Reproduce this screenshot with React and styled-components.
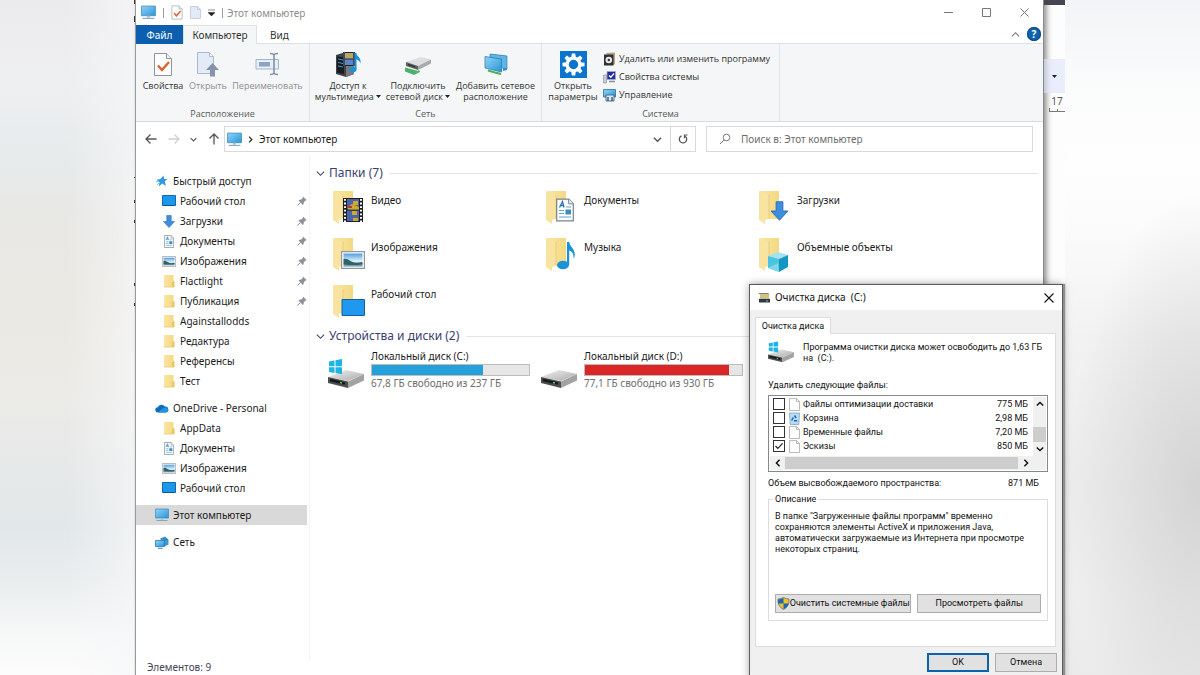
import React, { useState } from 'react';
import styled, { createGlobalStyle, css } from 'styled-components';

const GlobalStyle = createGlobalStyle`
  * {
    box-sizing: border-box;
  }

  body {
    margin: 0;
    font-family: 'Noto Sans', 'Open Sans', sans-serif;
    font-size: 10px;
    line-height: 12px;
    color: #1b1b1b;
  }

  button, input {
    font: inherit;
    color: inherit;
    margin: 0;
  }

  button {
    padding: 0;
    border: 0;
    background: none;
  }

  a {
    color: inherit;
    text-decoration: none;
  }

  svg {
    display: block;
    flex: none;
  }
`;

const Page = styled.div`
  display: grid;
  grid-template-columns: 134px minmax(0, 1fr) 135px;
  min-height: 100vh;
  overflow: hidden;
`;

const LeftBackdrop = styled.div`
  background:
    linear-gradient(90deg, rgba(246, 247, 248, 0) 50%, rgba(246, 247, 248, 0.7) 100%),
    linear-gradient(180deg, #ebebed 0%, #eeeff1 12%, #e7ebec 22%, #e8e8e5 32%, #ebe9e3 48%, #ebebe8 60%, #e2e7e9 78%, #e9edee 86%, #f7f8f8 94%, #fbfcfb 100%);
`;

const RightBackdrop = styled.div`
  background:
    radial-gradient(ellipse 130px 290px at 100% 72%, rgba(206, 206, 206, 0.8), rgba(206, 206, 206, 0) 100%),
    linear-gradient(180deg, #f3f4f7 0%, #fafbfb 12%, #fefefe 24%, #fbfbfb 34%, #f2f2f2 50%, #ececec 72%, #eeeeee 88%, #ebebeb 100%);
`;

const Desktop = styled.div`
  position: relative;
  display: grid;
  grid-template-columns: 1px minmax(0, 1fr) 21px;
  background: #ffffff;
`;

const mark = (from, to) => `transparent ${from}px, #333 ${from}px, #333 ${to}px, transparent ${to}px`;

const LeftSliver = styled.div`
  background:
    linear-gradient(180deg, ${[mark(0, 4), mark(16, 22), mark(177, 178), mark(200, 203), mark(220, 223), mark(283, 286), mark(303, 306)].join(', ')}),
    #e4e5e6;
`;

/* the document that stays visible behind the explorer */
const Behind = styled.div`
  display: flex;
  flex-direction: column;
  background: #fdfdfe;
  box-shadow: inset 7px 0 6px -5px rgba(0, 0, 0, 0.5);
  overflow: hidden;
`;

const BehindTop = styled.div`
  height: 5px;
  margin-bottom: 54px;
  background: #45464f;
`;

const BehindTool = styled.div`
  height: 34px;
  display: flex;
  align-items: center;
  justify-content: center;
  background: rgba(222, 226, 248, 0.6);
`;

const Ruler = styled.div`
  display: flex;
  flex-direction: column;
  align-items: center;
  padding-top: 2px;
  padding-left: 5px;
  color: #555;
`;

/* Explorer */

const Explorer = styled.main`
  display: flex;
  flex-direction: column;
  min-height: 100vh;
  background: #ffffff;
  border-left: 1px solid #9b9b9d;
  border-right: 1px solid #8a8a8c;
`;

const TitleBar = styled.header`
  display: flex;
  align-items: center;
  height: 25px;
  padding: 0 5px;
  color: #8d8d8d;
`;

const QuickTools = styled.div`
  display: flex;
  align-items: center;
  gap: 7px;
  margin-right: 4px;
`;

const Divider = styled.span`
  width: 1px;
  height: 10px;
  background: #9a9a9a;
`;

const WindowTitle = styled.h1`
  flex: 1;
  margin: 0;
  font-size: 10px;
  font-weight: 400;
`;

const WindowButtons = styled.div`
  display: flex;
  margin-right: -5px;
`;

const WindowButton = styled.button`
  display: flex;
  align-items: center;
  justify-content: center;
  width: 38px;
  height: 24px;
  color: #777;
`;

const TabBar = styled.div`
  display: flex;
  height: 19px;
  align-items: stretch;
  border-bottom: 1px solid #dcdfe3;
`;

const Tab = styled.button`
  display: flex;
  align-items: center;
  justify-content: center;
  height: 19px;
  padding: 0 13px;
  color: #333;

  ${props => props.$file && css`
    min-width: 47px;
    padding: 0;
    background: #0c5faf;
    color: #ffffff;
  `}

  ${props => props.$active && css`
    min-width: 74px;
    padding: 0;
    background: #f5f6f7;
    border: 1px solid #dfe1e4;
    border-bottom: 0;
  `}
`;

const TabTools = styled.div`
  display: flex;
  align-items: center;
  gap: 7px;
  margin-left: auto;
  padding-right: 2px;
  color: #777;
`;

const HelpButton = styled.button`
  display: flex;
  align-items: center;
  justify-content: center;
  width: 14px;
  height: 14px;
  border-radius: 50%;
  background: #0f62ad;
  box-shadow: inset 0 0 0 1px #0a4a86;
  color: #ffffff;
  font-weight: 700;
`;

const Ribbon = styled.div`
  display: flex;
  height: 78px;
  background: #f4f6f7;
  border-bottom: 1px solid #d8dadc;
  font-family: 'Open Sans', 'Noto Sans', sans-serif;
  font-size: 9px;
`;

const RibbonGroup = styled.section`
  display: flex;
  flex-direction: column;
  justify-content: space-between;
  padding: 6px 5px 1px;
  border-right: 1px solid #e1e3e5;
`;

const RibbonButtons = styled.div`
  display: flex;
  gap: 4px;
`;

const RibbonLabel = styled.h2`
  margin: 0;
  font-size: 9px;
  font-weight: 400;
  text-align: center;
  color: #5a5a5a;
`;

const RibbonButton = styled.button`
  display: flex;
  flex-direction: column;
  align-items: center;
  gap: 2px;
  width: ${props => props.$width}px;
  line-height: 11px;
  white-space: nowrap;
  color: ${props => (props.disabled ? '#8e8e90' : '#333')};
`;

const RibbonIcon = styled.span`
  display: flex;
  align-items: center;
  justify-content: center;
  height: 28px;
`;

const RibbonList = styled.div`
  display: flex;
  flex-direction: column;
  width: 171px;
`;

const RibbonListButton = styled.button`
  display: flex;
  align-items: center;
  gap: 3px;
  height: 18px;
  white-space: nowrap;
  color: #333;
`;

const AddressRow = styled.div`
  display: grid;
  grid-template-columns: auto minmax(0, 482fr) minmax(0, 327fr);
  align-items: center;
  height: 34px;
  padding: 0 10px 0 9px;
`;

const NavButtons = styled.div`
  display: flex;
  align-items: center;
  justify-content: space-between;
  width: 75px;
  margin-right: 4px;
  color: #555;
`;

const AddressBox = styled.div`
  display: flex;
  align-items: center;
  height: 26px;
  margin-right: 10px;
  border: 1px solid #d9d9d9;
  color: #1b1b1b;
`;

const Crumb = styled.button`
  display: flex;
  align-items: center;
  gap: 5px;
  flex: 1;
  padding-left: 2px;
`;

const BoxButton = styled.button`
  display: flex;
  align-items: center;
  justify-content: center;
  width: 25px;
  height: 24px;
  color: #555;
  border-left: ${props => (props.$ruled ? '1px solid #d9d9d9' : '0')};
`;

const SearchBox = styled.label`
  display: flex;
  align-items: center;
  gap: 10px;
  height: 26px;
  padding-left: 12px;
  border: 1px solid #d9d9d9;
`;

const SearchInput = styled.input`
  flex: 1;
  min-width: 0;
  padding: 0;
  border: 0;
  outline: 0;
  background: none;

  &::placeholder {
    color: #6d6d6d;
    opacity: 1;
  }
`;

const ExplorerBody = styled.div`
  flex: 1;
  display: flex;
`;

const Sidebar = styled.nav`
  width: 174px;
  padding: 15px 2px 0 0;
  border-right: 1px solid #f4f4f5;
`;

const TreeGroup = styled.ul`
  list-style: none;
  margin: 0 0 7px;
  padding: 0;
`;

const TreeLink = styled.a`
  display: flex;
  align-items: center;
  gap: 4px;
  height: 20px;
  padding-left: ${props => (props.$nested ? 26 : 19)}px;
  background: ${props => (props.$selected ? '#d9d9d9' : 'none')};
`;

const TreeIcon = styled.span`
  display: flex;
  justify-content: center;
  width: 14px;
`;

const TreeText = styled.span`
  flex: 1;
  white-space: nowrap;
`;

const Content = styled.div`
  flex: 1;
  min-width: 0;
  padding: 8px 5px 0 6px;
`;

const SectionHeader = styled.h2`
  display: flex;
  align-items: center;
  gap: 4px;
  height: 18px;
  margin: 0;
  font-size: 12px;
  font-weight: 400;
  color: #39406f;
  white-space: nowrap;

  &::after {
    content: '';
    flex: 1;
    height: 1px;
    margin-left: 3px;
    background: #e3e3e5;
  }
`;

const TileGrid = styled.div`
  display: grid;
  grid-template-columns: repeat(auto-fill, 213px);
  grid-auto-rows: 43px;
  row-gap: 4px;
  padding: ${props => (props.$tight ? 5 : 8)}px 0 0 12px;
`;

const Tile = styled.a`
  display: flex;
  white-space: nowrap;
`;

const TileIcon = styled.span`
  width: 43px;
  padding-left: ${props => (props.$drive ? 0 : 4)}px;
  padding-top: ${props => (props.$drive ? 7 : 0)}px;
`;

const TileText = styled.span`
  padding-top: 4px;
`;

const DriveText = styled.span`
  display: flex;
  flex-direction: column;
  width: 159px;
`;

const Capacity = styled.span`
  height: 12px;
  margin: 2px 0 1px;
  border: 1px solid #bcbcbc;
  background: #e6e6e6;
`;

const CapacityFill = styled.span`
  display: block;
  height: 100%;
  background: ${props => (props.$full ? '#da2626' : '#26a0da')};
`;

const DriveFree = styled.span`
  color: #6d6d6d;
`;

const StatusBar = styled.footer`
  height: 15px;
  padding-left: 11px;
  line-height: 15px;
  color: #3f4656;
`;

/* Disk cleanup dialog */

const Dialog = styled.section`
  position: absolute;
  top: 284px;
  right: 2px;
  width: 314px;
  border: 1px solid #5c5c5e;
  background: #f0f0f0;
  box-shadow: 2px 0 1px #8f8f90, 0 0 8px rgba(0, 0, 0, 0.35);
  font-family: Roboto, 'Liberation Sans', sans-serif;
  font-size: 9px;
  line-height: 11px;
  color: #111;
`;

const DialogTitle = styled.header`
  display: flex;
  align-items: center;
  gap: 4px;
  height: 25px;
  padding: 0 2px 0 7px;
  background: #ffffff;
  font-family: 'Noto Sans', 'Open Sans', sans-serif;

  h2 {
    flex: 1;
    margin: 0;
    font-size: 10px;
    font-weight: 400;
    white-space: pre;
  }
`;

const CloseButton = styled.button`
  display: flex;
  align-items: center;
  justify-content: center;
  width: 22px;
  height: 22px;
`;

const DialogBody = styled.div`
  padding: 7px 5px 8px;
`;

const DialogTab = styled.button`
  position: relative;
  z-index: 1;
  display: block;
  min-width: 76px;
  height: 17px;
  margin-bottom: -1px;
  background: #ffffff;
  border: 1px solid #dcdcdc;
  border-bottom: 0;
`;

const Panel = styled.div`
  margin-right: 1px;
  padding: 6px 7px 25px 12px;
  background: #ffffff;
  border: 1px solid #dcdcdc;
`;

const Summary = styled.div`
  display: flex;
  gap: 9px;
  margin-bottom: 16px;

  p {
    margin: 2px 0 0;
  }
`;

const FileBox = styled.div`
  margin-top: 4px;
  border: 1px solid #828790;
  padding: 1px;
`;

const FileScroll = styled.div`
  display: flex;
`;

const FileList = styled.ul`
  flex: 1;
  list-style: none;
  margin: 0;
  padding: 0 5px 3px 3px;
`;

const FileRow = styled.label`
  display: flex;
  align-items: center;
  gap: 3px;
  height: 14px;
  white-space: nowrap;
`;

const FileName = styled.span`
  flex: 1;
`;

const Check = styled.input`
  appearance: none;
  width: 12px;
  height: 12px;
  margin-right: 1px;
  border: 1px solid #333;
  background: #ffffff;

  &:checked {
    background: #ffffff url("data:image/svg+xml,%3Csvg xmlns='http://www.w3.org/2000/svg' viewBox='0 0 10 10'%3E%3Cpath d='M1.5 5l2.3 2.4L8.6 2.4' fill='none' stroke='%23222' stroke-width='1.2'/%3E%3C/svg%3E");
  }
`;

const ScrollColumn = styled.div`
  display: flex;
  flex-direction: column;
  width: 13px;
  background: #f0f0f0;
`;

const ScrollRow = styled.div`
  display: flex;
  height: 14px;
  background: #f0f0f0;
`;

const ScrollButton = styled.button`
  display: flex;
  align-items: center;
  justify-content: center;
  width: ${props => (props.$row ? 15 : 13)}px;
  height: 14px;
`;

const VThumb = styled.span`
  height: 15px;
  margin-top: auto;
  background: #cdcdcd;
`;

const HThumb = styled.span`
  flex: 1;
  margin: 1px 0;
  background: #cdcdcd;
`;

const Total = styled.div`
  display: flex;
  justify-content: space-between;
  margin: 6px 9px 5px 0;
`;

const Description = styled.fieldset`
  margin: 0;
  padding: 6px 6px 7px;
  border: 1px solid #dcdcdc;

  legend {
    margin-left: -2px;
    padding: 0 2px;
  }

  p {
    min-height: 83px;
    margin: 0;
  }
`;

const ButtonRow = styled.div`
  display: flex;
  gap: 6px;
  justify-content: ${props => (props.$end ? 'flex-end' : 'stretch')};
  margin-top: ${props => (props.$end ? 6 : 0)}px;
`;

const DialogButton = styled.button`
  display: flex;
  align-items: center;
  justify-content: center;
  flex: ${props => props.$grow || 'none'};
  width: 62px;
  height: 19px;
  white-space: nowrap;
  background: #e1e1e1;
  border: ${props => (props.$primary ? '2px solid #0a64ad' : '1px solid #adadad')};
`;

/* Icons */

const Gradients = () => (
  <svg width="0" height="0" style={{ position: 'absolute' }} aria-hidden="true">
    <defs>
      <linearGradient id="screen" x1="0" y1="0" x2="1" y2="1">
        <stop offset="0" stopColor="#8fd6f8" />
        <stop offset="1" stopColor="#2a93d6" />
      </linearGradient>
      <linearGradient id="folder" x1="0" y1="0" x2="1" y2="0">
        <stop offset="0" stopColor="#fbe6a2" />
        <stop offset="1" stopColor="#f3d982" />
      </linearGradient>
      <linearGradient id="sky" x1="0" y1="0" x2="0" y2="1">
        <stop offset="0" stopColor="#4f9fdc" />
        <stop offset="0.6" stopColor="#e2f2fb" />
        <stop offset="1" stopColor="#5a8f96" />
      </linearGradient>
      <linearGradient id="metal" x1="0" y1="0" x2="1" y2="1">
        <stop offset="0" stopColor="#f2f2f2" />
        <stop offset="1" stopColor="#a9a9a9" />
      </linearGradient>
    </defs>
  </svg>
);

const MonitorIcon = ({ width = 14 }) => (
  <svg width={width} height={width} viewBox="0 0 14 14">
    <path d="M.5 1h13v9H.5z" fill="url(#screen)" stroke="#3c88b8" strokeWidth=".7" />
    <path d="M5.500 10h3v1.800h-3z" fill="#9cc4da" />
    <path d="M1.500 12.500h11" stroke="#86a6b6" />
  </svg>
);

const PageCheckIcon = ({ width = 20, height = 25 }) => (
  <svg width={width} height={height} viewBox="0 0 20 25">
    <path d="M1.500 1.500h12l5 5v17h-17z" fill="#fff" stroke="#8f959b" />
    <path d="M13.500 1.500v5h5" fill="#f0f0f0" stroke="#8f959b" />
    <path d="M5 13.500l4 4.500 7-8" fill="none" stroke="#e0622a" strokeWidth="2.400" />
  </svg>
);

const BlankPageIcon = ({ width = 11, height = 13, fill = '#fff', stroke = '#a9a9a9' }) => (
  <svg width={width} height={height} viewBox="0 0 11 13">
    <path d="M.5.5h7l3 3v9H.5z" fill={fill} stroke={stroke} strokeWidth=".8" />
    <path d="M7.500.5v3h3" fill="none" stroke={stroke} strokeWidth=".8" />
  </svg>
);

const OpenIcon = () => (
  <svg width="24" height="26" viewBox="0 0 24 26">
    <path d="M1.500 1.500h12l4 4v17h-16z" fill="#e3ebf7" stroke="#a9b9d3" />
    <path d="M13.500 1.500v4h4" fill="#f3f6fb" stroke="#a9b9d3" />
    <path d="M16.500 12l6.500 7h-4v6.500h-5V19h-4z" fill="#8593ab" />
  </svg>
);

const RenameIcon = () => (
  <svg width="26" height="24" viewBox="0 0 26 24">
    <path d="M1 7.500h22.500v9.500H1z" fill="#e9eff8" stroke="#a3b4cf" />
    <path d="M4 10h11v4.500H4z" fill="#8fa2c0" />
    <path d="M15 1.500q4 0 4 2v17q0 2-4 2M23 1.500q-4 0-4 2v17q0 2 4 2" fill="none" stroke="#8391a8" strokeWidth="1.600" />
  </svg>
);

const MediaIcon = () => (
  <svg width="27" height="27" viewBox="0 0 27 27">
    <path d="M1 4l10-3 8 2v20l-8 3-10-3z" fill="#3f4246" />
    <path d="M11 4l8-1v20l-8 3z" fill="#77797c" />
    <path d="M2 5.500l7 1V23l-7-1.500z" fill="#191b1e" />
    <path d="M3 8l5 1M3 11.500l5 1M3 15l5 1" stroke="#3b9be0" />
    <path d="M8 1h12v14H8z" fill="#20242c" />
    <path d="M10 2h8v5.500h-8z" fill="#b9a765" />
    <path d="M10 8.500h8V14h-8z" fill="#5b86c9" />
    <path d="M9 1.500v13M19 1.500v13" stroke="#e8e8e8" strokeWidth=".8" strokeDasharray="1 1" />
    <path d="M20.500 2v16" stroke="#1c8fdb" strokeWidth="2" />
    <path d="M20.500 1.500c1 4 6 4.500 5 11-1-3-3-4-5-4.500z" fill="#1c8fdb" />
    <ellipse cx="18" cy="18.500" rx="3.500" ry="2.600" fill="#1c8fdb" />
  </svg>
);

const NetDriveIcon = () => (
  <svg width="28" height="22" viewBox="0 0 28 22">
    <path d="M2 9l15-5 10 2.500L14 13z" fill="#dedede" />
    <path d="M2 9l12 4v4L2 13z" fill="#5d6062" />
    <path d="M14 13l13-6.500v4L14 17z" fill="#a9a9a9" />
    <path d="M4 11.500l7 2.300" stroke="#222" />
    <path d="M1 14.500l6 1.500 7 2 1-1.500 1 2.500-6 3-9-3.500z" fill="#4fb069" />
  </svg>
);

const NetPlaceIcon = () => (
  <svg width="24" height="24" viewBox="0 0 24 24">
    <path d="M6 2l17 2v14l-4 1V6z" fill="#3d8fca" />
    <path d="M6 2l17 2v13L6 13z" fill="#5cb6ea" stroke="#2a74a8" strokeWidth=".6" />
    <path d="M1 4.500l16.500 2.500v13L1 16z" fill="url(#screen)" stroke="#2a74a8" strokeWidth=".7" />
    <path d="M4 18.500l7 2 6 1.500" fill="none" stroke="#49b05c" strokeWidth="2" />
  </svg>
);

const GearIcon = () => (
  <svg width="27" height="27" viewBox="0 0 27 27">
    <path d="M0 0h27v27H0z" fill="#0a74cf" />
    <circle cx="13.500" cy="13.500" r="6.300" fill="none" stroke="#fff" strokeWidth="3.200" />
    {[0, 45, 90, 135, 180, 225, 270, 315].map(angle => (
      <path key={angle} d="M11.800 2.500h3.400l.6 4h-4.600z" fill="#fff" transform={`rotate(${angle} 13.500 13.500)`} />
    ))}
  </svg>
);

const ProgramIcon = () => (
  <svg width="13" height="14" viewBox="0 0 13 14">
    <path d="M3 1l9-.5V12l-2 1z" fill="#b9a67e" />
    <path d="M1 2.500h9.500v11H1z" fill="#2e3236" />
    <circle cx="5.800" cy="8" r="3.300" fill="#e9e9e9" />
    <circle cx="5.800" cy="8" r="1.200" fill="#2e3236" />
  </svg>
);

const SystemIcon = () => (
  <svg width="13" height="14" viewBox="0 0 13 14">
    <path d="M.5 5h3v8h-3z" fill="#c9ccd2" stroke="#878b92" strokeWidth=".6" />
    <path d="M4 1.500h8.500v8H4z" fill="#1e2ea0" stroke="#a8aebb" strokeWidth=".8" />
    <path d="M6 5.500l1.800 1.800L11 3.500" fill="none" stroke="#fff" strokeWidth="1.300" />
    <path d="M6 11.500h6" stroke="#8b8f97" strokeWidth="1.500" />
  </svg>
);

const ManageIcon = () => (
  <svg width="13" height="14" viewBox="0 0 13 14">
    <path d="M.5 1.500h12v7.500H.5z" fill="url(#screen)" stroke="#2c6f9f" strokeWidth=".8" />
    <path d="M3 7h8v6H3z" fill="#dbe7f2" stroke="#31587a" strokeWidth=".8" />
    <path d="M5 9v4M9 9v4" stroke="#1e3e60" strokeWidth="1.200" />
  </svg>
);

const Chevron = ({ dir = 'down', size = 9, weight = 1.2 }) => {
  const paths = {
    down: 'M1 3l4 4 4-4',
    up: 'M1 7l4-4 4 4',
    left: 'M7 1L3 5l4 4',
    right: 'M3 1l4 4-4 4',
  };
  return (
    <svg width={size} height={size} viewBox="0 0 10 10">
      <path d={paths[dir]} fill="none" stroke="currentColor" strokeWidth={weight} />
    </svg>
  );
};

const Arrow = ({ d, color = '#555' }) => (
  <svg width="12" height="12" viewBox="0 0 12 12">
    <path d={d} fill="none" stroke={color} strokeWidth="1.300" />
  </svg>
);

const Caret = ({ width = 5 }) => (
  <svg width={width} height="8" viewBox="0 0 5 8" style={{ display: 'inline' }}>
    <path d="M0 3h5L2.500 6z" fill="#222" />
  </svg>
);

const CrossIcon = ({ size = 10 }) => (
  <svg width={size} height={size} viewBox="0 0 10 10">
    <path d="M.5.5l9 9M9.500.5l-9 9" stroke="currentColor" strokeWidth="1.100" />
  </svg>
);

const RefreshIcon = () => (
  <svg width="10" height="10" viewBox="0 0 10 10">
    <path d="M3.500 1.800A3.700 3.700 0 1 0 7.200 2.200" fill="none" stroke="#555" strokeWidth="1.300" />
    <path d="M9.500 1h-3v3.200" fill="none" stroke="#555" strokeWidth="1.200" />
  </svg>
);

const LensIcon = () => (
  <svg width="12" height="12" viewBox="0 0 12 12">
    <circle cx="7.500" cy="4.500" r="3.300" fill="none" stroke="#777" />
    <path d="M5 7L1 11" stroke="#777" />
  </svg>
);

const StarIcon = () => (
  <svg width="12" height="12" viewBox="0 0 12 12">
    <path d="M7.500.5l.6 3.400 3.500.1-2.800 2.300 1 4.600-3.500-2.300-3.600 3 .9-4.400L.5 4.700l3.900-.6z" fill="#2f9ade" />
    <path d="M0 7l3-1M1 10l2-2" stroke="#7cc0ea" />
  </svg>
);

const DesktopIcon = () => (
  <svg width="14" height="12" viewBox="0 0 14 12">
    <path d="M.5.5h13v10H.5z" fill="#1b97ec" stroke="#1569ab" />
    <path d="M1 10.500h12" stroke="#0f5690" />
  </svg>
);

const DownIcon = ({ width = 12, height = 13 }) => (
  <svg width={width} height={height} viewBox="0 0 12 13">
    <path d="M3.800.5h4.400v6h3.300L6 12.500.5 6.500h3.300z" fill="#3d8ede" stroke="#2a6db4" strokeWidth=".6" />
  </svg>
);

const DocIcon = ({ width = 10, height = 13 }) => (
  <svg width={width} height={height} viewBox="0 0 18 23">
    <path d="M.7.700h12l4.600 4.600v17H.7z" fill="#fff" stroke="#76838f" strokeWidth="1.200" />
    <path d="M12.700.7v4.600h4.600" fill="#eef3f7" stroke="#76838f" />
    <path d="M3.500 9l3-6 1.500 6M4.500 7h3" fill="none" stroke="#2672b5" strokeWidth="1.300" />
    <path d="M10 8.500h5M3 12h5M3 15h5M3 18.500h12" stroke="#5aa3d8" strokeWidth="1.200" />
    <path d="M9.500 11h5.500v5H9.500z" fill="#3b8cc4" />
  </svg>
);

const PictureIcon = ({ width = 14, height = 11 }) => (
  <svg width={width} height={height} viewBox="0 0 24 18">
    <path d="M.6.600h22.800v16.800H.6z" fill="#fff" stroke="#8d979f" strokeWidth="1.200" />
    <path d="M2.500 2.500h19v13h-19z" fill="url(#sky)" />
    <path d="M2.500 8q3-1 7 2t12 1V13.500q-10 1-19 0z" fill="#33606a" />
  </svg>
);

const SmallFolderIcon = () => (
  <svg width="12" height="14" viewBox="0 0 12 14">
    <path d="M1 1h9.500v12H1z" fill="url(#folder)" />
    <path d="M9 8l2.500-1v6H9z" fill="#ecc45c" />
    <path d="M1 13h10" stroke="#e7c670" strokeWidth=".8" />
  </svg>
);

const CloudIcon = () => (
  <svg width="14" height="9" viewBox="0 0 14 9">
    <path d="M3 8.500A2.600 2.600 0 0 1 2.800 3.300 4 4 0 0 1 9.800 2.600 3 3 0 0 1 11 8.500z" fill="#0f6cbf" />
    <path d="M4 8.500q0-2 3-3.500l3.500-1.700a2.700 2.700 0 0 1 .8 5.200z" fill="#1f93e4" />
  </svg>
);

const NetworkIcon = () => (
  <svg width="14" height="13" viewBox="0 0 14 13">
    <path d="M5 2.500l5-2 3.500 3v5l-4 2z" fill="#3f98cc" />
    <path d="M.5 4.500h9V10.500h-9z" fill="url(#screen)" stroke="#2878ae" strokeWidth=".8" />
    <path d="M3 12.300h4.500M8 2.500l5 1.500" stroke="#2f7fb3" />
  </svg>
);

const PinIcon = () => (
  <svg width="10" height="10" viewBox="0 0 10 10">
    <path d="M6 .5L9.500 4l-1 .4-1.700 1.800-.2 2L5.800 9 1.500 4.600l.8-.8 2-.2 1.600-1.800z" fill="#8b9299" />
    <path d="M3.600 6.400L.5 9.500" stroke="#8b9299" />
  </svg>
);

const overlays = {
  video: (
    <g transform="translate(11 8)">
      <path d="M0 0h20v24H0z" fill="#1c1e22" />
      <path d="M4 1h12v10.500H4zM4 12.500h12V23H4z" fill="#4765a8" />
      <path d="M5 9l4-3 7 3v2.500H5zM9 13h5v4H9zM10 3h5v4h-5zM10 20h5v3h-5z" fill="#d3a829" />
      <path d="M4 8h5v2H4z" fill="#b53a34" />
      <path d="M2 1v23M18 1v23" stroke="#fff" strokeWidth="2" strokeDasharray="1.800 1.800" />
    </g>
  ),
  docs: (
    <g transform="translate(11 8)">
      <DocIcon width={18} height={24} />
    </g>
  ),
  down: (
    <g transform="translate(12 11)">
      <DownIcon width={19} height={20} />
    </g>
  ),
  pictures: (
    <g transform="translate(9 14)">
      <PictureIcon width={24} height={18} />
    </g>
  ),
  music: (
    <g fill="#1a93d6">
      <path d="M22 5h2.200c.5 5 6.500 7 5.500 14-.4 1.500-1 2-1.400 2.500.8-4-1-7-4.100-8V28H22z" />
      <ellipse cx="18" cy="28" rx="6" ry="4.300" />
    </g>
  ),
  cube: (
    <g>
      <path d="M10 19l10-4 10 3-9 4z" fill="#a5e3f3" />
      <path d="M10 19l11 3v13l-11-4z" fill="#4cc3e0" />
      <path d="M21 22l9-4v12l-9 5z" fill="#1497c2" />
      <path d="M10 31l10-5 1 9z" fill="#9fe4f1" opacity=".6" />
    </g>
  ),
  desktop: (
    <path d="M10 15.500h22.500v16H10z" fill="#2098ef" stroke="#15619c" />
  ),
};

const FolderIcon = ({ kind }) => (
  <svg width="34" height="36" viewBox="0 0 34 36">
    <path d="M2 1h19v28H6z" fill="url(#folder)" />
    <path d="M1 1l10 4v24l-4 1v4l-6-4z" fill="#f9e3a0" />
    <path d="M11 5v23" stroke="#e3c878" strokeWidth=".8" />
    {overlays[kind]}
  </svg>
);

const DriveIcon = ({ windows, width = 36, height = 32 }) => (
  <svg width={width} height={height} viewBox="0 0 36 32">
    <path d="M0 20l18-7 18 4-16 7z" fill="url(#metal)" />
    <path d="M0 20l20 4.500V31L0 26z" fill="#4b4d4f" />
    <path d="M20 24.500L36 17v6.500L20 31z" fill="#a3a3a3" />
    <path d="M2 23l15 3.500" stroke="#17191a" strokeWidth="2.500" />
    <path d="M12 25.600l2 .5" stroke="#4fd07a" strokeWidth="1.500" />
    {windows && (
      <path d="M1 4.500l5.500-1v5.700H1zM7.500 3.300L14 2v7.200H7.500zM1 10.300h5.500V16L1 15zM7.500 10.300H14v7l-6.500-1.200z" fill="#1fb4e6" />
    )}
  </svg>
);

const CleanupIcon = () => (
  <svg width="14" height="12" viewBox="0 0 14 12">
    <path d="M1 1h10l2 1.500H3z" fill="#8f8352" />
    <path d="M3 3h9v3.500H3z" fill="#d4c37a" />
    <path d="M2 7h11v3.500H2z" fill="#34373a" />
    <path d="M2 7l1-1h9l1 1z" fill="#b9b9b9" />
    <path d="M9 9h2" stroke="#5fc57c" />
  </svg>
);

const BinIcon = () => (
  <svg width="11" height="13" viewBox="0 0 11 13">
    <path d="M.5 1h10L9.800 12.500H1.200z" fill="#b9dcf2" stroke="#7fa5bf" strokeWidth=".8" />
    <path d="M5.500 3.500l1.600 2.700M8.200 8.700H5M2.700 8.500l1.500-3" stroke="#1c6bb4" strokeWidth="1.600" />
  </svg>
);

const ShieldIcon = () => (
  <svg width="13" height="13" viewBox="0 0 13 13">
    <path d="M6.500.5Q9 2 12 2q.5 7.500-5.500 10.500Q.5 9.500 1 2q3 0 5.500-1.500z" fill="#f2c02f" stroke="#4d5f70" strokeWidth=".7" />
    <path d="M6.500.9v5.600H1.100Q1 4 1.300 2.400 4 2.300 6.500.9zM6.500 6.500h5.200q-1 4-5.200 5.600z" fill="#1c66b0" />
  </svg>
);

/* Data */

const quickAccess = [
  { text: 'Рабочий стол', icon: <DesktopIcon />, pinned: true },
  { text: 'Загрузки', icon: <DownIcon />, pinned: true },
  { text: 'Документы', icon: <DocIcon />, pinned: true },
  { text: 'Изображения', icon: <PictureIcon />, pinned: true },
  { text: 'Flactlight', icon: <SmallFolderIcon />, pinned: true },
  { text: 'Публикация', icon: <SmallFolderIcon />, pinned: true },
  { text: 'Againstallodds', icon: <SmallFolderIcon /> },
  { text: 'Редактура', icon: <SmallFolderIcon /> },
  { text: 'Референсы', icon: <SmallFolderIcon /> },
  { text: 'Тест', icon: <SmallFolderIcon /> },
];

const oneDrive = [
  { text: 'AppData', icon: <SmallFolderIcon /> },
  { text: 'Документы', icon: <DocIcon /> },
  { text: 'Изображения', icon: <PictureIcon /> },
  { text: 'Рабочий стол', icon: <DesktopIcon /> },
];

const folders = [
  { text: 'Видео', kind: 'video' },
  { text: 'Документы', kind: 'docs' },
  { text: 'Загрузки', kind: 'down' },
  { text: 'Изображения', kind: 'pictures' },
  { text: 'Музыка', kind: 'music' },
  { text: 'Объемные объекты', kind: 'cube' },
  { text: 'Рабочий стол', kind: 'desktop' },
];

const drives = [
  { text: 'Локальный диск (C:)', free: '67,8 ГБ свободно из 237 ГБ', used: 71, windows: true },
  { text: 'Локальный диск (D:)', free: '77,1 ГБ свободно из 930 ГБ', used: 92 },
];

const cleanupFiles = [
  { name: 'Файлы оптимизации доставки', size: '775 МБ' },
  { name: 'Корзина', size: '2,98 МБ', icon: <BinIcon /> },
  { name: 'Временные файлы', size: '7,20 МБ' },
  { name: 'Эскизы', size: '850 МБ', checked: true },
];

const TreeItem = ({ text, icon, nested, pinned, selected }) => (
  <li>
    <TreeLink href="#" $nested={nested} $selected={selected}>
      <TreeIcon>{icon}</TreeIcon>
      <TreeText>{text}</TreeText>
      {pinned && <PinIcon />}
    </TreeLink>
  </li>
);

const CleanupDialog = () => {
  const [checked, setChecked] = useState(cleanupFiles.map(file => !!file.checked));
  const toggle = index => setChecked(checked.map((value, i) => (i === index ? !value : value)));

  return (
    <Dialog role="dialog" aria-labelledby="cleanup-title">
      <DialogTitle>
        <CleanupIcon />
        <h2 id="cleanup-title">Очистка диска  (C:)</h2>
        <CloseButton aria-label="Закрыть"><CrossIcon /></CloseButton>
      </DialogTitle>
      <DialogBody>
        <DialogTab>Очистка диска</DialogTab>
        <Panel>
          <Summary>
            <DriveIcon windows width={26} height={23} />
            <p>Программа очистки диска может освободить до 1,63 ГБ<br />на &nbsp;(C:).</p>
          </Summary>
          <div>Удалить следующие файлы:</div>
          <FileBox>
            <FileScroll>
              <FileList>
                {cleanupFiles.map((file, index) => (
                  <li key={file.name}>
                    <FileRow>
                      <Check type="checkbox" checked={checked[index]} onChange={() => toggle(index)} />
                      {file.icon || <BlankPageIcon />}
                      <FileName>{file.name}</FileName>
                      <span>{file.size}</span>
                    </FileRow>
                  </li>
                ))}
              </FileList>
              <ScrollColumn>
                <ScrollButton aria-label="Вверх"><Chevron dir="up" weight={1.8} size={8} /></ScrollButton>
                <VThumb />
                <ScrollButton aria-label="Вниз"><Chevron weight={1.8} size={8} /></ScrollButton>
              </ScrollColumn>
            </FileScroll>
            <ScrollRow>
              <ScrollButton $row aria-label="Влево"><Chevron dir="left" weight={1.8} size={8} /></ScrollButton>
              <HThumb />
              <ScrollButton $row aria-label="Вправо"><Chevron dir="right" weight={1.8} size={8} /></ScrollButton>
              <ScrollButton as="span" />
            </ScrollRow>
          </FileBox>
          <Total>
            <span>Объем высвобождаемого пространства:</span>
            <span>871 МБ</span>
          </Total>
          <Description>
            <legend>Описание</legend>
            <p>
              В папке "Загруженные файлы программ" временно<br />
              сохраняются элементы ActiveX и приложения Java,<br />
              автоматически загружаемые из Интернета при просмотре<br />
              некоторых страниц.
            </p>
            <ButtonRow>
              <DialogButton $grow={137}><ShieldIcon />Очистить системные файлы</DialogButton>
              <DialogButton $grow={124}>Просмотреть файлы</DialogButton>
            </ButtonRow>
          </Description>
        </Panel>
        <ButtonRow $end>
          <DialogButton $primary>OK</DialogButton>
          <DialogButton>Отмена</DialogButton>
        </ButtonRow>
      </DialogBody>
    </Dialog>
  );
};

const App = () => (
  <Page>
    <GlobalStyle />
    <Gradients />
    <LeftBackdrop />
    <Desktop>
      <LeftSliver />
      <Explorer>
        <TitleBar>
          <QuickTools>
            <MonitorIcon width={15} />
            <Divider />
            <PageCheckIcon width={12} height={15} />
            <BlankPageIcon fill="#e3eaf6" stroke="#bcc8dc" />
            <svg width="7" height="8" viewBox="0 0 7 8"><path d="M0 1h7M0 3.500h7L3.500 7z" fill="#222" stroke="#222" strokeWidth=".5" /></svg>
            <Divider />
          </QuickTools>
          <WindowTitle>Этот компьютер</WindowTitle>
          <WindowButtons>
            <WindowButton aria-label="Свернуть">
              <svg width="9" height="9" viewBox="0 0 9 9"><path d="M0 4.500h9" stroke="currentColor" /></svg>
            </WindowButton>
            <WindowButton aria-label="Развернуть">
              <svg width="9" height="9" viewBox="0 0 9 9"><path d="M.5.5h8v8h-8z" fill="none" stroke="currentColor" /></svg>
            </WindowButton>
            <WindowButton aria-label="Закрыть"><CrossIcon size={9} /></WindowButton>
          </WindowButtons>
        </TitleBar>
        <TabBar>
          <Tab $file>Файл</Tab>
          <Tab $active>Компьютер</Tab>
          <Tab>Вид</Tab>
          <TabTools>
            <Chevron dir="up" />
            <HelpButton>?</HelpButton>
          </TabTools>
        </TabBar>
        <Ribbon>
          <RibbonGroup>
            <RibbonButtons>
              <RibbonButton $width={44}>
                <RibbonIcon><PageCheckIcon /></RibbonIcon>
                Свойства
              </RibbonButton>
              <RibbonButton $width={38} disabled>
                <RibbonIcon><OpenIcon /></RibbonIcon>
                Открыть
              </RibbonButton>
              <RibbonButton $width={73} disabled>
                <RibbonIcon><RenameIcon /></RibbonIcon>
                Переименовать
              </RibbonButton>
            </RibbonButtons>
            <RibbonLabel>Расположение</RibbonLabel>
          </RibbonGroup>
          <RibbonGroup>
            <RibbonButtons>
              <RibbonButton $width={66}>
                <RibbonIcon><MediaIcon /></RibbonIcon>
                <span>Доступ к<br />мультимедиа <Caret /></span>
              </RibbonButton>
              <RibbonButton $width={66}>
                <RibbonIcon><NetDriveIcon /></RibbonIcon>
                <span>Подключить<br />сетевой диск <Caret /></span>
              </RibbonButton>
              <RibbonButton $width={81}>
                <RibbonIcon><NetPlaceIcon /></RibbonIcon>
                <span>Добавить сетевое<br />расположение</span>
              </RibbonButton>
            </RibbonButtons>
            <RibbonLabel>Сеть</RibbonLabel>
          </RibbonGroup>
          <RibbonGroup>
            <RibbonButtons>
              <RibbonButton $width={52}>
                <RibbonIcon><GearIcon /></RibbonIcon>
                <span>Открыть<br />параметры</span>
              </RibbonButton>
              <RibbonList>
                <RibbonListButton><ProgramIcon />Удалить или изменить программу</RibbonListButton>
                <RibbonListButton><SystemIcon />Свойства системы</RibbonListButton>
                <RibbonListButton><ManageIcon />Управление</RibbonListButton>
              </RibbonList>
            </RibbonButtons>
            <RibbonLabel>Система</RibbonLabel>
          </RibbonGroup>
        </Ribbon>
        <AddressRow>
          <NavButtons>
            <button aria-label="Назад"><Arrow d="M11.500 6H1M5.500 1.500L1 6l4.500 4.500" /></button>
            <button aria-label="Вперед"><Arrow d="M.5 6H11M6.500 1.500L11 6l-4.500 4.500" color="#d0d0d0" /></button>
            <button aria-label="Последние расположения"><Chevron size={7} weight={1.6} /></button>
            <button aria-label="Вверх"><Arrow d="M6 11.500V1M1.500 5.500L6 1l4.500 4.500" /></button>
          </NavButtons>
          <AddressBox>
            <Crumb>
              <MonitorIcon width={15} />
              <Chevron dir="right" size={7} weight={1.6} />
              Этот компьютер
            </Crumb>
            <BoxButton aria-label="Предыдущие расположения"><Chevron weight={1.6} /></BoxButton>
            <BoxButton $ruled aria-label="Обновить"><RefreshIcon /></BoxButton>
          </AddressBox>
          <SearchBox>
            <LensIcon />
            <SearchInput type="text" placeholder="Поиск в: Этот компьютер" aria-label="Поиск в: Этот компьютер" />
          </SearchBox>
        </AddressRow>
        <ExplorerBody>
          <Sidebar>
            <TreeGroup>
              <TreeItem text="Быстрый доступ" icon={<StarIcon />} />
              {quickAccess.map(item => <TreeItem key={item.text} nested {...item} />)}
            </TreeGroup>
            <TreeGroup>
              <TreeItem text="OneDrive - Personal" icon={<CloudIcon />} />
              {oneDrive.map(item => <TreeItem key={item.text} nested {...item} />)}
            </TreeGroup>
            <TreeGroup>
              <TreeItem text="Этот компьютер" icon={<MonitorIcon />} selected />
            </TreeGroup>
            <TreeGroup>
              <TreeItem text="Сеть" icon={<NetworkIcon />} />
            </TreeGroup>
          </Sidebar>
          <Content>
            <SectionHeader><Chevron /> Папки (7)</SectionHeader>
            <TileGrid>
              {folders.map(folder => (
                <Tile key={folder.text} href="#">
                  <TileIcon><FolderIcon kind={folder.kind} /></TileIcon>
                  <TileText>{folder.text}</TileText>
                </Tile>
              ))}
            </TileGrid>
            <SectionHeader><Chevron /> Устройства и диски (2)</SectionHeader>
            <TileGrid $tight>
              {drives.map(drive => (
                <Tile key={drive.text} href="#">
                  <TileIcon $drive><DriveIcon windows={drive.windows} /></TileIcon>
                  <DriveText>
                    {drive.text}
                    <Capacity>
                      <CapacityFill $full={drive.used > 90} style={{ width: `${drive.used}%` }} />
                    </Capacity>
                    <DriveFree>{drive.free}</DriveFree>
                  </DriveText>
                </Tile>
              ))}
            </TileGrid>
          </Content>
        </ExplorerBody>
        <StatusBar>Элементов: 9</StatusBar>
      </Explorer>
      <Behind>
        <BehindTop />
        <BehindTool><Caret width={7} /></BehindTool>
        <Ruler>
          17
          <svg width="17" height="5" viewBox="0 0 17 5"><path d="M0 4.500h17M.5 1v3M8.500 2v2M16.500 1v3" stroke="#777" fill="none" /></svg>
        </Ruler>
      </Behind>
      <CleanupDialog />
    </Desktop>
    <RightBackdrop />
  </Page>
);

export default App;
